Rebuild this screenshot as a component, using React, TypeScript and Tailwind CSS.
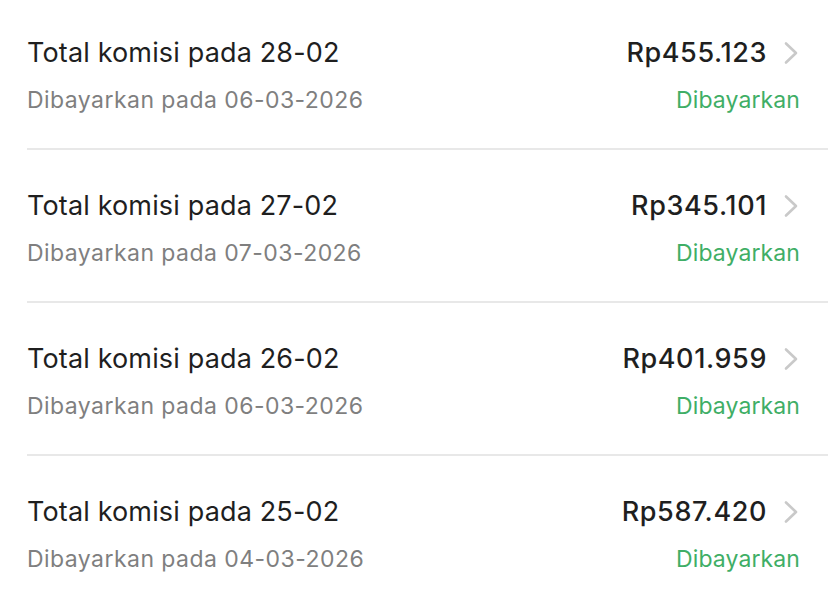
const ROWS = [
  { day: '28-02', paid: '06-03-2026', amount: 'Rp455.123' },
  { day: '27-02', paid: '07-03-2026', amount: 'Rp345.101' },
  { day: '26-02', paid: '06-03-2026', amount: 'Rp401.959' },
  { day: '25-02', paid: '04-03-2026', amount: 'Rp587.420' },
];

function Chevron() {
  return (
    <svg width="16" height="24" viewBox="0 0 16 24" fill="none" className="mr-[1px]">
      <path
        d="M3 2.5 L13 12 L3 21.5"
        stroke="#c9c9c9"
        strokeWidth="2.6"
        strokeLinecap="round"
        strokeLinejoin="round"
      />
    </svg>
  );
}

export default function App() {
  return (
    <div className="h-[604px] w-[828px] overflow-hidden bg-white font-['Inter',sans-serif]">
      <div className="-mt-[3px] pl-[27px]">
        {ROWS.map((row, i) => (
          <div
            key={row.day}
            className={
              'flex flex-col pr-[28px] pt-[39px] pb-[33px] ' +
              (i < ROWS.length - 1 ? 'border-b-2 border-[#e8e8e8]' : '')
            }
          >
            <div className="flex h-[34px] items-center justify-between">
              <span className="text-[27px] tracking-[0.15px] text-[#1f1f1f]">
                Total komisi pada {row.day}
              </span>
              <div className="flex items-center gap-[16px]">
                <span className="text-[27px] font-medium tracking-[0.6px] text-[#1f1f1f]">
                  {row.amount}
                </span>
                <Chevron />
              </div>
            </div>
            <div className="mt-[15px] flex h-[30px] items-center justify-between">
              <span className="text-[23px] tracking-[0.45px] text-[#7f7f7f]">
                Dibayarkan pada {row.paid}
              </span>
              <span className="text-[23px] tracking-[0.1px] text-[#3fae66]">Dibayarkan</span>
            </div>
          </div>
        ))}
      </div>
    </div>
  );
}
